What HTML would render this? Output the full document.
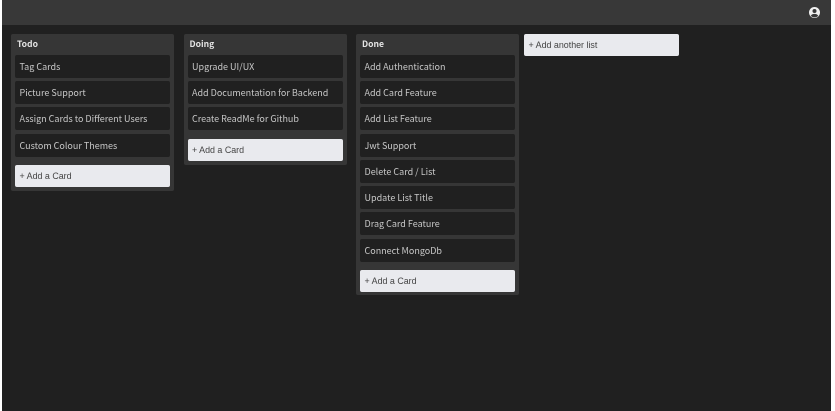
<!DOCTYPE html>
<html>
<head>
<meta charset="utf-8">
<style>
html,body{margin:0;padding:0;width:835px;height:411px;overflow:hidden;background:#fff;}
body{font-family:"Noto Sans CJK JP","DejaVu Sans","Liberation Sans",sans-serif;font-size:9px;position:relative;}
.app{position:absolute;left:2px;top:0;width:829px;height:411px;background:#202020;}
.bar{position:absolute;left:2px;top:0;width:829px;height:25px;background:#383838;}
.list{position:absolute;top:34px;width:163px;background:#363636;border-radius:2px;}
.title{position:absolute;left:6px;top:3px;font-weight:700;color:#e4e4e4;font-size:8.6px;line-height:14px;filter:blur(.25px);}
.card{position:absolute;left:4px;width:155px;height:23px;line-height:23px;background:#202020;border-radius:2px;color:#c8c8c8;white-space:nowrap;padding:0;}
.card span,.add span{display:block;padding-left:4.5px;filter:blur(.25px);}
.add{position:absolute;height:22px;line-height:22px;background:#e9eaee;border-radius:2px;color:#444;width:155px;white-space:nowrap;font-family:"Liberation Sans",sans-serif;font-size:8.9px;}
svg{position:absolute;left:808px;top:5.5px;}
</style>
</head>
<body>
<div class="app"></div>
<div class="bar"></div>
<svg width="13" height="13" viewBox="0 0 13 13"><circle cx="6.5" cy="6.5" r="5.5" fill="#efefef"/><circle cx="6.5" cy="5" r="2" fill="#383838"/><path d="M2.8 9.8C3.6 8.3 5 7.9 6.5 7.9S9.4 8.3 10.2 9.8C9.2 10.9 8 11.4 6.5 11.4S3.8 10.9 2.8 9.8Z" fill="#383838"/></svg>

<div class="list" style="left:11px;height:157px">
<div class="title">Todo</div>
<div class="card" style="top:21px"><span>Tag Cards</span></div>
<div class="card" style="top:47px"><span>Picture Support</span></div>
<div class="card" style="top:73px"><span>Assign Cards to Different Users</span></div>
<div class="card" style="top:100px"><span>Custom Colour Themes</span></div>
<div class="add" style="left:4px;top:131px"><span>+ Add a Card</span></div>
</div>

<div class="list" style="left:183.5px;height:131px">
<div class="title">Doing</div>
<div class="card" style="top:21px"><span>Upgrade UI/UX</span></div>
<div class="card" style="top:47px"><span>Add Documentation for Backend</span></div>
<div class="card" style="top:73px"><span>Create ReadMe for Github</span></div>
<div class="add" style="left:4px;top:105px"><span>+ Add a Card</span></div>
</div>

<div class="list" style="left:356px;height:261px">
<div class="title">Done</div>
<div class="card" style="top:21px"><span>Add Authentication</span></div>
<div class="card" style="top:47px"><span>Add Card Feature</span></div>
<div class="card" style="top:73px"><span>Add List Feature</span></div>
<div class="card" style="top:100px"><span>Jwt Support</span></div>
<div class="card" style="top:126px"><span>Delete Card / List</span></div>
<div class="card" style="top:152px"><span>Update List Title</span></div>
<div class="card" style="top:178px"><span>Drag Card Feature</span></div>
<div class="card" style="top:205px"><span>Connect MongoDb</span></div>
<div class="add" style="left:4px;top:236px"><span>+ Add a Card</span></div>
</div>

<div class="add" style="left:524px;top:34px"><span>+ Add another list</span></div>
</body>
</html>
